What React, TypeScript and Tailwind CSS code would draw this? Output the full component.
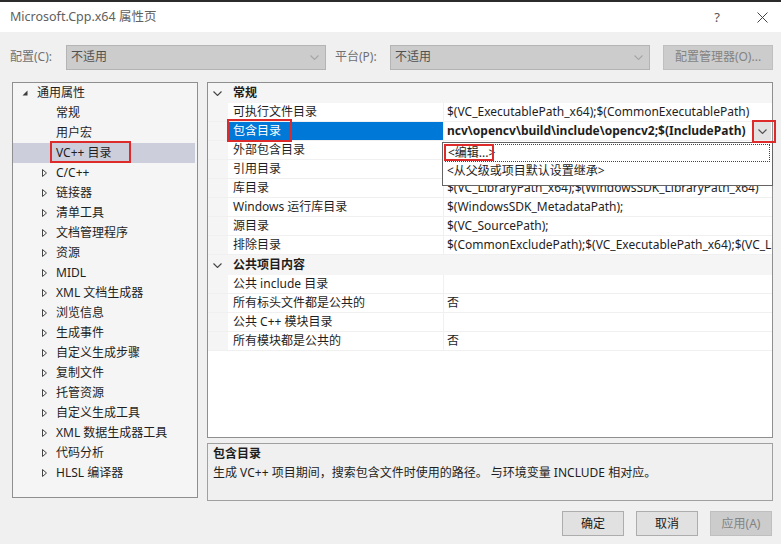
import React from "react";

type TreeItem = { label: string; level: 0 | 1; arrow?: "open" | "closed"; selected?: boolean };

const treeItems: TreeItem[] = [
  { label: "通用属性", level: 0, arrow: "open" },
  { label: "常规", level: 1 },
  { label: "用户宏", level: 1 },
  { label: "VC++ 目录", level: 1, selected: true },
  { label: "C/C++", level: 1, arrow: "closed" },
  { label: "链接器", level: 1, arrow: "closed" },
  { label: "清单工具", level: 1, arrow: "closed" },
  { label: "文档管理程序", level: 1, arrow: "closed" },
  { label: "资源", level: 1, arrow: "closed" },
  { label: "MIDL", level: 1, arrow: "closed" },
  { label: "XML 文档生成器", level: 1, arrow: "closed" },
  { label: "浏览信息", level: 1, arrow: "closed" },
  { label: "生成事件", level: 1, arrow: "closed" },
  { label: "自定义生成步骤", level: 1, arrow: "closed" },
  { label: "复制文件", level: 1, arrow: "closed" },
  { label: "托管资源", level: 1, arrow: "closed" },
  { label: "自定义生成工具", level: 1, arrow: "closed" },
  { label: "XML 数据生成器工具", level: 1, arrow: "closed" },
  { label: "代码分析", level: 1, arrow: "closed" },
  { label: "HLSL 编译器", level: 1, arrow: "closed" },
];

type GridRow =
  | { kind: "group"; label: string }
  | { kind: "prop"; name: string; value: string; selected?: boolean };

// values hidden under the open dropdown are left empty
const gridRows: GridRow[] = [
  { kind: "group", label: "常规" },
  { kind: "prop", name: "可执行文件目录", value: "$(VC_ExecutablePath_x64);$(CommonExecutablePath)" },
  { kind: "prop", name: "包含目录", value: "ncv\\opencv\\build\\include\\opencv2;$(IncludePath)", selected: true },
  { kind: "prop", name: "外部包含目录", value: "" },
  { kind: "prop", name: "引用目录", value: "" },
  { kind: "prop", name: "库目录", value: "$(VC_LibraryPath_x64);$(WindowsSDK_LibraryPath_x64)" },
  { kind: "prop", name: "Windows 运行库目录", value: "$(WindowsSDK_MetadataPath);" },
  { kind: "prop", name: "源目录", value: "$(VC_SourcePath);" },
  { kind: "prop", name: "排除目录", value: "$(CommonExcludePath);$(VC_ExecutablePath_x64);$(VC_LibraryPath_x64)" },
  { kind: "group", label: "公共项目内容" },
  { kind: "prop", name: "公共 include 目录", value: "" },
  { kind: "prop", name: "所有标头文件都是公共的", value: "否" },
  { kind: "prop", name: "公共 C++ 模块目录", value: "" },
  { kind: "prop", name: "所有模块都是公共的", value: "否" },
];

function Chevron({ color = "#444" }: { color?: string }) {
  return (
    <svg width="9" height="5" viewBox="0 0 9 5" aria-hidden>
      <polyline points="0.5,0.5 4.5,4.5 8.5,0.5" fill="none" stroke={color} strokeWidth="1.1" />
    </svg>
  );
}

function TreeArrow({ open }: { open: boolean }) {
  if (open)
    return (
      <svg width="6" height="6" viewBox="0 0 6 6" aria-hidden>
        <polygon points="5.5,0.5 5.5,5.5 0.5,5.5" fill="#3c3c3c" />
      </svg>
    );
  return (
    <svg width="5" height="8" viewBox="0 0 5 8" aria-hidden>
      <polygon points="0.5,0.5 4.5,4 0.5,7.5" fill="none" stroke="#444" strokeWidth="1" />
    </svg>
  );
}

function Select({ value }: { value: string }) {
  return (
    <div className="flex h-[25px] w-[260px] items-center justify-between border border-[#b4b4b4] bg-[#cccccc] pl-[4px] pr-[6px] text-[#505050]">
      <span>{value}</span>
      <Chevron color="#a6a6a6" />
    </div>
  );
}

function Button({ label, disabled }: { label: string; disabled?: boolean }) {
  return (
    <div
      className={
        disabled
          ? "flex h-[25px] w-[62px] items-center justify-center border border-[#bfbfbf] bg-[#cccccc] text-[#838383]"
          : "flex h-[25px] w-[62px] items-center justify-center border border-[#adadad] bg-[#e1e1e1] text-[#1a1a1a]"
      }
    >
      {label}
    </div>
  );
}

function RedBox({ className }: { className: string }) {
  return <div className={"pointer-events-none absolute border-2 border-[#dd2a2a] " + className} />;
}

export default function App() {
  return (
    <div className="relative flex h-[544px] w-[781px] flex-col overflow-hidden bg-[#f0f0f0] font-['Noto_Sans','Noto_Sans_CJK_SC',sans-serif] text-[12px] leading-[18px] text-[#1e1e1e]">
      <div className="h-[2px] bg-[#2b2b2b]" />

      {/* title bar */}
      <div className="flex h-[30px] items-center bg-white pl-[10px] pr-[13px]">
        <span className="text-[12.5px] text-[#606060]">Microsoft.Cpp.x64 属性页</span>
        <span className="ml-auto text-[13px] text-[#555]">?</span>
        <svg className="ml-[37px]" width="11" height="11" viewBox="0 0 11 11" aria-hidden>
          <path d="M0.5 0.5 L10.5 10.5 M10.5 0.5 L0.5 10.5" stroke="#444" strokeWidth="1" />
        </svg>
      </div>

      {/* configuration bar */}
      <div className="flex h-[50px] items-center pl-[10px]">
        <span className="w-[56px] text-[#707070]">配置(C):</span>
        <Select value="不适用" />
        <span className="ml-[9px] w-[55px] text-[#707070]">平台(P):</span>
        <Select value="不适用" />
        <div className="ml-[13px] flex h-[25px] w-[110px] items-center justify-center border border-[#bfbfbf] bg-[#cccccc] text-[#838383]">
          配置管理器(O)...
        </div>
      </div>

      <div className="flex pl-[12px]">
        {/* category tree */}
        <div className="h-[416px] w-[186px] border border-[#8f8f8f] bg-[#f5f5f5]">
          {treeItems.map((t) => (
            <div
              key={t.label}
              className={
                "flex h-[20px] items-center " +
                (t.level === 0 ? "pl-[9px] " : "pl-[29px] ") +
                (t.selected ? "mr-[2px] bg-[#cccedb]" : "")
              }
            >
              <span className={t.level === 0 ? "flex w-[15px] items-center" : "flex w-[14px] items-center"}>
                {t.arrow && <TreeArrow open={t.arrow === "open"} />}
              </span>
              <span className="whitespace-nowrap">{t.label}</span>
            </div>
          ))}
        </div>

        <div className="ml-[9px] flex w-[566px] flex-col">
          {/* property grid */}
          <div className="h-[356px] border border-[#8f8f8f] bg-white">
            {gridRows.map((r, i) =>
              r.kind === "group" ? (
                <div key={i} className="flex h-[20px] items-center bg-[#f5f5f5]">
                  <span className="flex w-[25px] items-center pl-[5px]">
                    <Chevron />
                  </span>
                  <span className="font-bold">{r.label}</span>
                </div>
              ) : (
                <div key={i} className="flex h-[19px] border-b border-[#f0f0f0]">
                  <div className="w-[20px] shrink-0 bg-[#f5f5f5]" />
                  <div
                    className={
                      r.selected
                        ? "w-[215px] shrink-0 whitespace-nowrap bg-[#0078d7] pl-[5px] text-white"
                        : "w-[215px] shrink-0 whitespace-nowrap pl-[5px]"
                    }
                  >
                    {r.name}
                  </div>
                  <div className="flex min-w-0 flex-1 items-center border-l border-[#f0f0f0] pl-[3px]">
                    <span className={"min-w-0 flex-1 overflow-hidden whitespace-nowrap " + (r.selected ? "font-bold" : "")}>
                      {r.value}
                    </span>
                    {r.selected && (
                      <span className="mr-[1px] flex h-[18px] w-[17px] shrink-0 items-center justify-center bg-[#e2e2e2]">
                        <Chevron color="#505050" />
                      </span>
                    )}
                  </div>
                </div>
              )
            )}
          </div>

          {/* description */}
          <div className="mt-[5px] h-[58px] border border-[#a0a0a0] px-[5px] pt-[1px]">
            <div className="font-bold">包含目录</div>
            <div className="mt-[1px]">生成 VC++ 项目期间，搜索包含文件时使用的路径。 与环境变量 INCLUDE 相对应。</div>
          </div>

          {/* buttons */}
          <div className="mt-[10px] flex justify-end gap-[12px] pr-[1px]">
            <Button label="确定" />
            <Button label="取消" />
            <Button label="应用(A)" disabled />
          </div>
        </div>
      </div>

      {/* open dropdown of 包含目录 */}
      <div className="absolute left-[442px] top-[142px] h-[44px] w-[331px] border border-[#646464] bg-white">
        <div className="mx-[2px] mt-[1px] h-[18px] border border-dotted border-[#444] pl-[2px] leading-[16px]">&lt;编辑...&gt;</div>
        <div className="pl-[4px] leading-[18px]">&lt;从父级或项目默认设置继承&gt;</div>
      </div>

      {/* annotation boxes */}
      <RedBox className="left-[50px] top-[141px] h-[22px] w-[81px]" />
      <RedBox className="left-[227px] top-[119px] h-[23px] w-[65px]" />
      <RedBox className="left-[752px] top-[120px] h-[23px] w-[24px]" />
      <RedBox className="left-[444px] top-[144px] h-[17px] w-[50px]" />
    </div>
  );
}
